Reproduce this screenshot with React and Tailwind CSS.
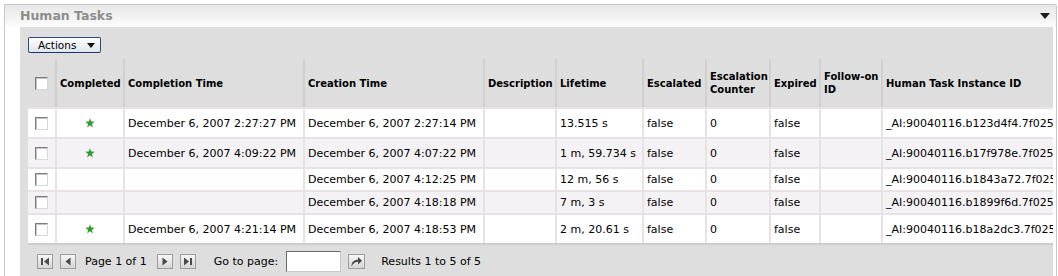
import React from "react";

const cols = [27, 68, 180, 180, 72, 87, 63, 64, 50, 62, 260];

const headers = [
  "",
  "Completed",
  "Completion Time",
  "Creation Time",
  "Description",
  "Lifetime",
  "Escalated",
  "Escalation Counter",
  "Expired",
  "Follow-on ID",
  "Human Task Instance ID",
];

const rows = [
  { done: true, comp: "December 6, 2007 2:27:27 PM", cre: "December 6, 2007 2:27:14 PM", life: "13.515 s", id: "_AI:90040116.b123d4f4.7f0258c3" },
  { done: true, comp: "December 6, 2007 4:09:22 PM", cre: "December 6, 2007 4:07:22 PM", life: "1 m, 59.734 s", id: "_AI:90040116.b17f978e.7f0258c3" },
  { done: false, comp: "", cre: "December 6, 2007 4:12:25 PM", life: "12 m, 56 s", id: "_AI:90040116.b1843a72.7f0258c3" },
  { done: false, comp: "", cre: "December 6, 2007 4:18:18 PM", life: "7 m, 3 s", id: "_AI:90040116.b1899f6d.7f0258c3" },
  { done: true, comp: "December 6, 2007 4:21:14 PM", cre: "December 6, 2007 4:18:53 PM", life: "2 m, 20.61 s", id: "_AI:90040116.b18a2dc3.7f0258c3" },
];

function Checkbox() {
  return (
    <span className="block w-[13px] h-[13px] bg-white border border-t-[#7c7c7c] border-l-[#7c7c7c] border-r-[#d8d8d8] border-b-[#d8d8d8] shadow-[inset_1px_1px_0_#c4c4c4]" />
  );
}

function Star() {
  return (
    <svg width="10" height="10" viewBox="0 0 10 10">
      <polygon points="5,0.3 6.2,3.6 9.7,3.7 6.9,5.9 7.9,9.4 5,7.3 2.1,9.4 3.1,5.9 0.3,3.7 3.8,3.6" fill="#2f9a2f" />
    </svg>
  );
}

function NavBtn({ kind }) {
  return (
    <span className="flex items-center justify-center w-[16px] h-[15px] border border-[#9c9c9c] bg-gradient-to-b from-[#f6f6f6] to-[#d6d6d6]">
      <svg width="10" height="9" viewBox="0 0 10 9">
        {kind === "first" && (
          <>
            <rect x="1" y="1" width="2" height="7" fill="#4a4a4a" />
            <polygon points="9,0.5 9,8.5 4,4.5" fill="#4a4a4a" />
          </>
        )}
        {kind === "prev" && <polygon points="7.5,0.5 7.5,8.5 2.5,4.5" fill="#4a4a4a" />}
        {kind === "next" && <polygon points="2.5,0.5 2.5,8.5 7.5,4.5" fill="#4a4a4a" />}
        {kind === "last" && (
          <>
            <polygon points="1,0.5 1,8.5 6,4.5" fill="#4a4a4a" />
            <rect x="7" y="1" width="2" height="7" fill="#4a4a4a" />
          </>
        )}
      </svg>
    </span>
  );
}

export default function App() {
  return (
    <div className="w-[1058px] h-[276px] bg-white overflow-hidden font-['DejaVu_Sans',sans-serif] text-black">
      <div className="ml-[4px] mt-[4px] w-[1053px] h-[272px] border-t border-l border-r border-[#c8c8c8] rounded-tr-[3px] flex flex-col">
        <div className="h-[22px] shrink-0 bg-gradient-to-b from-[#e7e7e7] to-[#fcfcfc] flex items-center justify-between pl-[15px] pr-[6px]">
          <span className="text-[12.5px] font-bold text-[#8d8d8d] leading-none">Human Tasks</span>
          <svg width="10" height="6" viewBox="0 0 10 6" className="mt-[-1px]">
            <polygon points="0,0 10,0 5,6" fill="#1e1e1e" />
          </svg>
        </div>
        <div className="flex-1 ml-[15px] mr-[3px] bg-[#dedede] overflow-hidden pt-[10px] pl-[8px]">
          <button className="flex items-center w-[73px] h-[16px] border border-[#2c4a80] border-b-[#1c3566] rounded-[2px] bg-gradient-to-b from-white to-[#dfe5ee] pl-[9px] text-[10.5px] leading-none">
            <span>Actions</span>
            <svg width="8" height="5" viewBox="0 0 8 5" className="ml-[11px]">
              <polygon points="0,0 8,0 4,5" fill="#111" />
            </svg>
          </button>

          <div className="mt-[6px] w-[1200px]">
            {/* header */}
            <div className="flex h-[48px]">
              {headers.map((h, i) => (
                <div
                  key={i}
                  style={{ width: cols[i] }}
                  className={`shrink-0 flex items-center text-[10px] font-bold leading-[13px] ${i === 0 ? "justify-center" : "border-l-2 border-[#d0d0d0] pl-[3px] pr-[2px]"}`}
                >
                  {i === 0 ? <Checkbox /> : h}
                </div>
              ))}
            </div>
            {/* rows */}
            {rows.map((r, ri) => {
              const cells = [
                <Checkbox key="c" />,
                r.done ? <Star key="s" /> : null,
                r.comp,
                r.cre,
                "",
                r.life,
                "false",
                "0",
                "false",
                "",
                r.id,
              ];
              return (
                <div
                  key={ri}
                  className={`flex border-t-2 border-[#e6e2e6] ${r.done ? "h-[30px]" : "h-[23px]"} ${ri % 2 === 1 ? "bg-[#f5f2f5]" : "bg-white"}`}
                >
                  {cells.map((c, i) => (
                    <div
                      key={i}
                      style={{ width: cols[i] }}
                      className={`shrink-0 flex items-center text-[11px] leading-none whitespace-nowrap ${i === 0 || i === 1 ? "justify-center" : "pl-[3px]"} ${i === 0 ? "" : "border-l-2 border-[#e6e2e6]"}`}
                    >
                      {c}
                    </div>
                  ))}
                </div>
              );
            })}
            {/* footer */}
            <div className="flex items-center h-[34px] border-t-2 border-[#cdcdcd] pl-[9px] text-[11px] leading-none">
              <NavBtn kind="first" />
              <span className="ml-[7px]"><NavBtn kind="prev" /></span>
              <span className="ml-[9px]">Page 1 of 1</span>
              <span className="ml-[10px]"><NavBtn kind="next" /></span>
              <span className="ml-[7px]"><NavBtn kind="last" /></span>
              <span className="ml-[18px]">Go to page:</span>
              <span className="ml-[8px] block w-[55px] h-[21px] bg-white border border-t-[#6a6a6a] border-l-[#6a6a6a] border-r-[#c8c8c8] border-b-[#c8c8c8]" />
              <span className="ml-[7px] flex items-center justify-center w-[17px] h-[15px] border border-[#9c9c9c] bg-gradient-to-b from-[#f6f6f6] to-[#d6d6d6]">
                <svg width="13" height="11" viewBox="0 0 13 11">
                  <path d="M1.5 10.5 C1.5 6 4 3.8 8 3.8 L8 1 L12 4.8 L8 8.6 L8 5.8 C5 5.8 3 7.5 1.5 10.5 Z" fill="#444" />
                </svg>
              </span>
              <span className="ml-[16px]">Results 1 to 5 of 5</span>
            </div>
          </div>
        </div>
      </div>
    </div>
  );
}
